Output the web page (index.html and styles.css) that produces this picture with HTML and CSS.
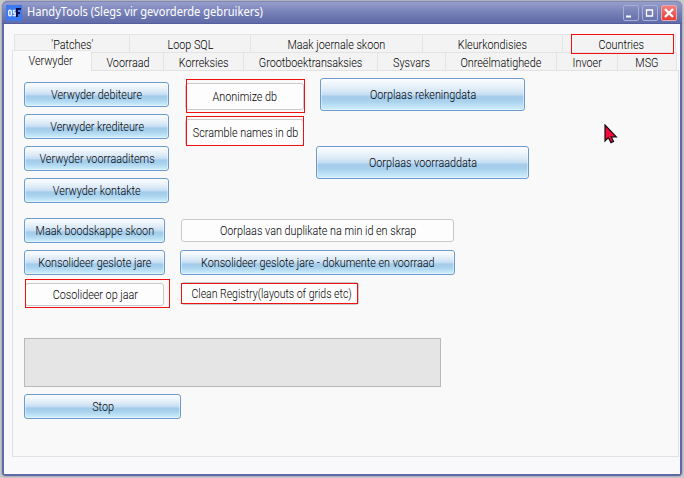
FILE: index.html
```html
<!DOCTYPE html>
<html lang="af">
<head>
<meta charset="utf-8">
<title>HandyTools</title>
<link rel="stylesheet" href="styles.css">
</head>
<body>
<div class="window">
  <header class="titlebar">
    <svg class="appicon" width="16" height="16" viewBox="0 0 16 16"><rect width="16" height="16" fill="#3e78ed"/><g fill="none" stroke="#e8f3ff" stroke-width="1.4"><rect x="2.7" y="5.2" width="2.6" height="5.6" rx="1.2"/><path d="M9.3 5.5H7.5V8h1.6v2.6H6.6"/></g><path d="M11 12V4h4M11 8h3" fill="none" stroke="#080d49" stroke-width="2"/></svg>
    <h1><span>HandyTools (Slegs vir gevorderde gebruikers)</span></h1>
    <div class="controls">
      <i class="ctl"><svg width="16" height="16"><path d="M3 11.5h5" stroke="#fff" stroke-width="2"/></svg></i>
      <i class="ctl"><svg width="16" height="16"><path d="M4.5 5v6h6V5zM4 5h7" fill="none" stroke="#fff" stroke-width="1.3"/></svg></i>
      <i class="ctl close"><svg width="16" height="16"><path d="M4 4l8 8M12 4l-8 8" stroke="#fff" stroke-width="2.3"/></svg></i>
    </div>
  </header>
  <main class="client">
    <nav class="tabs upper">
      <div class="tab"><span>'Patches'</span></div>
      <div class="tab"><span>Loop SQL</span></div>
      <div class="tab"><span>Maak joernale skoon</span></div>
      <div class="tab"><span>Kleurkondisies</span></div>
      <div class="tab marked"><span>Countries</span></div>
    </nav>
    <nav class="tabs lower">
      <div class="tab active"><span>Verwyder</span></div>
      <div class="tab"><span>Voorraad</span></div>
      <div class="tab"><span>Korreksies</span></div>
      <div class="tab"><span>Grootboektransaksies</span></div>
      <div class="tab"><span>Sysvars</span></div>
      <div class="tab"><span>Onreëlmatighede</span></div>
      <div class="tab"><span>Invoer</span></div>
      <div class="tab"><span>MSG</span></div>
    </nav>
    <section class="pane">
      <div class="group first">
        <div class="stack remove">
          <button class="blue"><span>Verwyder debiteure</span></button>
          <button class="blue"><span>Verwyder krediteure</span></button>
          <button class="blue"><span>Verwyder voorraaditems</span></button>
          <button class="blue"><span>Verwyder kontakte</span></button>
        </div>
        <div class="stack names">
          <button class="plain anonimize"><span>Anonimize db</span></button>
          <button class="plain scramble"><span>Scramble names in db</span></button>
        </div>
        <div class="stack replace">
          <button class="blue accounts"><span>Oorplaas rekeningdata</span></button>
          <button class="blue stock"><span>Oorplaas voorraaddata</span></button>
        </div>
      </div>
      <div class="group second">
        <div class="stack clean">
          <button class="blue"><span>Maak boodskappe skoon</span></button>
          <button class="blue"><span>Konsolideer geslote jare</span></button>
          <button class="plain year"><span>Cosolideer op jaar</span></button>
        </div>
        <div class="stack merge">
          <button class="plain duplicates"><span>Oorplaas van duplikate na min id en skrap</span></button>
          <button class="blue"><span>Konsolideer geslote jare - dokumente en voorraad</span></button>
          <button class="plain registry"><span>Clean Registry(layouts of grids etc)</span></button>
        </div>
      </div>
      <div class="output"></div>
      <button class="blue stop"><span>Stop</span></button>
    </section>
  </main>
</div>
<svg class="pointer" width="14" height="20" viewBox="0 0 14 20"><path d="M1 1v16l3.4-3.4 2.6 5 2.5-1.2-2.2-4.6h5z" fill="#f5083c" stroke="#160b10" stroke-width="1.2"/></svg>
</body>
</html>
```
FILE: styles.css
```css
* { box-sizing: border-box; }

body {
  margin: 0;
  width: 684px;
  height: 478px;
  padding: 1px 2px 2px;
  overflow: hidden;
  background: #c9c9cb;
  font-family: Roboto, "Liberation Sans", sans-serif;
  font-size: 12px;
  font-weight: 300;
  color: #000;
}

.window {
  width: 680px;
  height: 475px;
  padding: 0 2px 2px;
  border-radius: 6px 6px 4px 4px;
  background: #5f69a8;
  box-shadow: 0 0 2px #72768f;
}

.titlebar {
  display: flex;
  align-items: center;
  height: 23px;
  margin: 0 -2px;
  padding: 0 5px 0 4px;
  border-radius: 6px 6px 0 0;
  border-top: 1px solid #7e86b8;
  border-bottom: 1px solid #535e9f;
  background: linear-gradient(#969ecb, #7c86bb 40%, #6670ac 85%, #626ca9);
}

.appicon { flex: none; }

h1 {
  flex: 1;
  margin: 0 0 1px 5px;
  font: 12px/20px "Noto Sans", sans-serif;
  color: #fff;
  white-space: nowrap;
}

h1 span {
  display: inline-block;
  transform: scaleX(.925);
  transform-origin: left;
}

.controls { display: flex; gap: 3px; }

.ctl {
  width: 16px;
  height: 16px;
  border: 1px solid #a9b0d6;
  border-radius: 2px;
  background: linear-gradient(#8790c1, #6771ad);
}

.ctl svg { display: block; margin: -1px; }

.close {
  border-color: #e9a8b0;
  background: linear-gradient(#f2827d, #e93935);
}

.client {
  height: 450px;
  padding: 10px 1px 0 8px;
  background: #f9f9fb;
}

.tabs {
  display: grid;
  height: 18px;
  margin-left: 2px;
}

.upper { grid-template-columns: 115px 121px 172px 140px 114px; }
.lower {
  grid-template-columns: 79px 72px 80px 134px 68px 111px 61px 60px;
  margin-left: 0;
}

.tab {
  display: flex;
  align-items: center;
  justify-content: center;
  position: relative;
  padding-top: 2px;
  background: #f3f3f3;
  border: solid #e4e4e4;
  border-width: 1px 0 0 1px;
  white-space: nowrap;
}

.tab:last-child { border-right-width: 1px; }

.active {
  z-index: 1;
  margin: -2px 0 -1px;
  padding: 0 2px 0 0;
  background: #f9f9f9;
}

.tab span,
button span {
  display: inline-block;
  flex: none;
  transform: scaleX(.9);
}

.marked { padding-left: 5px; }

.marked::after {
  content: "";
  position: absolute;
  z-index: 2;
  inset: -1px 1px -2px 8px;
  border: 1px solid #f01010;
}

.pane {
  width: 667px;
  height: 387px;
  padding: 7px 11px;
  border: 1px solid #e2e2e2;
  background: #f9f9f9;
}

.group { display: flex; align-items: flex-start; }
.stack { display: flex; flex-direction: column; gap: 7px; }

button {
  display: flex;
  align-items: center;
  justify-content: center;
  position: relative;
  height: 25px;
  padding: 1px 0 0 1px;
  border-radius: 3px;
  font: inherit;
  color: #000;
  white-space: nowrap;
}

.blue {
  border: 1px solid #6c9ace;
  background: linear-gradient(#fdfeff, #dceaf7 36%, #c5def3 50%, #a3cbea 57%, #a9d2ee 72%, #d0effc);
  box-shadow: inset 0 0 0 1px #ffffff66;
}

.plain {
  border: 1px solid #c9c9c9;
  background: #fdfdfd;
}

.plain::after {
  content: "";
  position: absolute;
  border: 1px solid #f01010;
}

.duplicates::after { display: none; }

.first { height: 140px; }
.remove { width: 145px; padding-top: 4px; }

.names {
  width: 119px;
  margin-left: 16px;
  padding-top: 5px;
  gap: 9px;
}
.names button { height: 27px; }
.anonimize::after { inset: -5px -2px -4px 0; }
.scramble { padding-left: 3px; }
.scramble::after { inset: -4px -1px -1px 0; }

.replace {
  align-items: center;
  width: 213px;
  margin-left: 12px;
  gap: 35px;
}
.replace button { height: 33px; }
.accounts { width: 205px; }
.stock { width: 213px; }

.second { height: 120px; }
.clean { width: 141px; }
.year { width: 139px; height: 23px; margin: 1px 0 0 1px; }
.year::after { inset: -5px -7px -3px -1px; }

.merge { width: 275px; margin-left: 15px; }
.merge .plain { margin-left: 1px; }
.merge .duplicates { width: 273px; height: 23px; margin: 1px 1px; }
.merge .registry { width: 178px; height: 23px; padding-left: 3px; }
.registry span { transform: scaleX(.875); }
.registry::after { inset: 0 0 0 -1px; }

.output {
  width: 417px;
  height: 49px;
  margin-bottom: 7px;
  border: 1px solid #b9b9b9;
  background: #e5e5e5;
}

.stop { width: 157px; }

.pointer { position: absolute; left: 604px; top: 124px; }
```
